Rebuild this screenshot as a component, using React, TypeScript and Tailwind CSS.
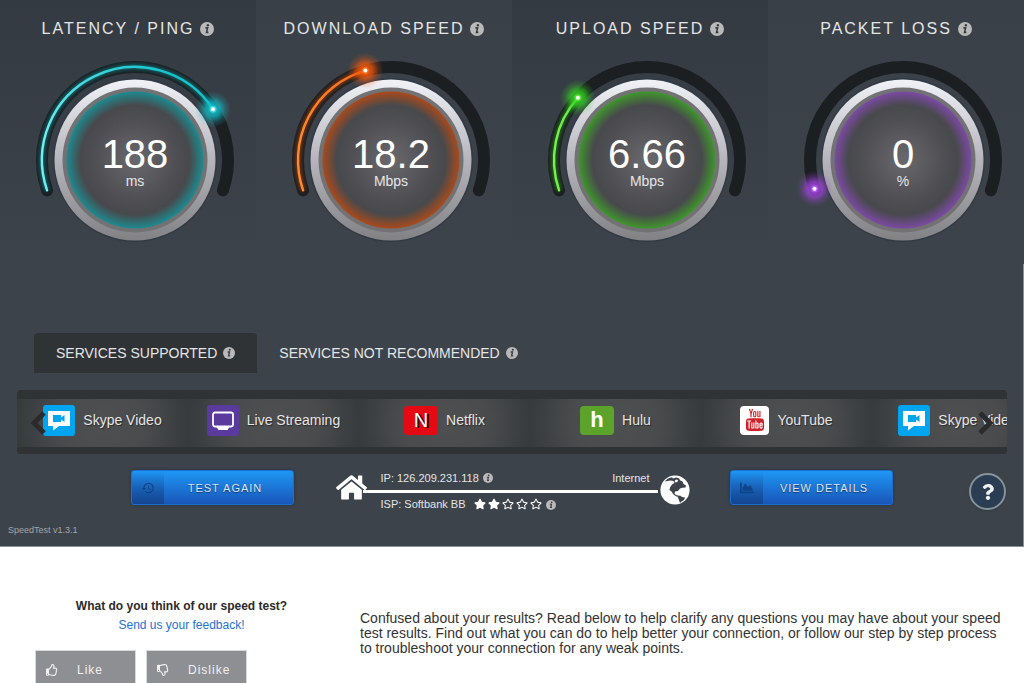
import type { ReactNode } from "react";
import { FaChartArea, FaHome, FaQuestion, FaRegStar, FaRegThumbsDown, FaRegThumbsUp, FaStar } from "react-icons/fa";
import { MdHistory } from "react-icons/md";
import { TfiYoutube } from "react-icons/tfi";

type GaugeData = {
  id: string;
  title: string;
  value: string;
  unit: string;
  // degrees travelled along the 216 degree track
  sweep: number;
  color: string;
  light: string;
  shade: string;
};

const gauges: GaugeData[] = [
  { id: "ping", title: "LATENCY / PING", value: "188", unit: "ms", sweep: 165, color: "#12c4cf", light: "#6ff0f0", shade: "#1d8a90" },
  { id: "down", title: "DOWNLOAD SPEED", value: "18.2", unit: "Mbps", sweep: 92, color: "#ff5a0a", light: "#ff8a2a", shade: "#a94a1c" },
  { id: "up", title: "UPLOAD SPEED", value: "6.66", unit: "Mbps", sweep: 60, color: "#35d822", light: "#74f24c", shade: "#3f962d" },
  { id: "loss", title: "PACKET LOSS", value: "0", unit: "%", sweep: 0, color: "#a545e6", light: "#c07af5", shade: "#7b4aa3" },
];

const CX = 120;
const CY = 112;
const R = 93;
const START = 162;

function point(deg: number) {
  const rad = (deg * Math.PI) / 180;
  return { x: CX + R * Math.cos(rad), y: CY + R * Math.sin(rad) };
}

function arc(from: number, to: number) {
  const a = point(from);
  const b = point(to);
  return `M${a.x} ${a.y}A${R} ${R} 0 ${to - from > 180 ? 1 : 0} 1 ${b.x} ${b.y}`;
}

export default function App() {
  return (
    <div className="min-h-screen bg-white font-['Liberation_Sans',Arial,sans-serif] text-[#e4e5e6]">
      <main className="border-r border-b border-[#8d9093] bg-[#3d434b]">
        <div className="-mr-px grid grid-cols-4">
          {gauges.map((g) => (
            <Gauge key={g.id} {...g} />
          ))}
        </div>
        <Tabs />
        <Carousel />
        <div className="mt-4 grid grid-cols-[1fr_auto_1fr] items-start">
          <span />
          <div className="flex items-start gap-10">
            <ActionButton icon={<MdHistory className="size-3.5" />}>TEST AGAIN</ActionButton>
            <Connection />
            <ActionButton icon={<FaChartArea className="size-3.5" />}>VIEW DETAILS</ActionButton>
          </div>
          <button
            type="button"
            aria-label="Help"
            className="mt-[3px] mr-[17px] flex size-[37px] items-center justify-center justify-self-end rounded-full border-2 border-[#84929a] bg-[#2b3d52] text-[#eef0f1] shadow"
          >
            <FaQuestion className="size-4" />
          </button>
        </div>
        <p className="px-2 pt-3.5 pb-2.5 text-[9px] leading-3 text-[#a3a6a9]">SpeedTest v1.3.1</p>
      </main>
      <Feedback />
    </div>
  );
}

function Gauge({ id, title, value, unit, sweep, color, light, shade }: GaugeData) {
  const dot = point(START + sweep);
  return (
    <section className="bg-linear-to-b from-[#394047] to-[#3d434b] pt-5 pb-4 odd:from-[#343a42] odd:to-[#3c434b]">
      <h2 className="flex h-[18px] items-center justify-center gap-1.5 text-base tracking-[2px]">
        {title}
        <InfoIcon className="size-3.5" />
      </h2>
      <div className="relative mt-2.5 pl-3.5">
        <svg viewBox="0 0 240 200" className="mx-auto block h-[200px] w-[240px] overflow-visible">
          <defs>
            <linearGradient id={`${id}-rim`} x1="0" y1="0" x2="0" y2="1">
              <stop offset="0" stopColor="#f1f1f8" />
              <stop offset="0.5" stopColor="#b5b5bb" />
              <stop offset="1" stopColor="#828286" />
            </linearGradient>
            <radialGradient id={`${id}-face`}>
              <stop offset="0" stopColor="#69686d" />
              <stop offset="0.6" stopColor="#4f4f53" />
              <stop offset="0.8" stopColor="#48494c" />
              <stop offset="1" stopColor={shade} />
            </radialGradient>
            <radialGradient id={`${id}-dot`}>
              <stop offset="0" stopColor={color} />
              <stop offset="0.4" stopColor={color} stopOpacity="0.7" />
              <stop offset="0.7" stopColor={color} stopOpacity="0.25" />
              <stop offset="1" stopColor={color} stopOpacity="0" />
            </radialGradient>
            <linearGradient id={`${id}-line`} gradientUnits="userSpaceOnUse" x1="30" y1="140" x2="160" y2="30">
              <stop offset="0.2" stopColor={light} />
              <stop offset="1" stopColor={color} />
            </linearGradient>
            <filter id={`${id}-blur`} x="-30%" y="-30%" width="160%" height="160%">
              <feGaussianBlur stdDeviation="2" />
            </filter>
          </defs>
          <path d={arc(START - 1, 379)} fill="none" stroke="#1c1f22" strokeWidth="12" strokeLinecap="round" />
          {sweep > 0 && (
            <>
              <path d={arc(START - 1, START + sweep)} fill="none" stroke={color} strokeOpacity="0.55" strokeWidth="4" filter={`url(#${id}-blur)`} />
              <path d={arc(START - 1, START + sweep)} fill="none" stroke={`url(#${id}-line)`} strokeWidth="2.4" strokeLinecap="round" />
            </>
          )}
          <circle cx={CX} cy={CY} r="82" fill="#323a45" />
          <circle cx={CX} cy={CY} r="80.5" fill={`url(#${id}-rim)`} />
          <circle cx={CX} cy={CY} r="72.5" fill="#727274" />
          <circle cx={CX} cy={CY} r="68.5" fill={`url(#${id}-face)`} />
          <circle cx={dot.x} cy={dot.y} r="18" fill={`url(#${id}-dot)`} />
          <circle cx={dot.x} cy={dot.y} r="3.5" fill={light} fillOpacity="0.5" />
          <circle cx={dot.x} cy={dot.y} r="2" fill="#ffffff" />
        </svg>
        <p className="absolute inset-x-0 top-[86px] pl-3.5 text-center text-white">
          <span className="block text-[40px] leading-10">{value}</span>
          <span className="block text-sm leading-[14px] text-[#e6e6e8]">{unit}</span>
        </p>
      </div>
    </section>
  );
}

function Tabs() {
  return (
    <div role="tablist" className="mt-[69px] ml-[34px] flex text-sm">
      <button type="button" role="tab" aria-selected="true" className="flex h-10 items-center gap-1.5 rounded-t bg-[#2f3336] px-[22px]">
        SERVICES SUPPORTED
        <InfoIcon className="size-3" />
      </button>
      <button type="button" role="tab" aria-selected="false" className="flex h-10 items-center gap-1.5 px-[22px]">
        SERVICES NOT RECOMMENDED
        <InfoIcon className="size-3" />
      </button>
    </div>
  );
}

function Carousel() {
  return (
    <div className="relative mt-[17px] mr-4 ml-[17px] overflow-hidden rounded bg-[#2f3336] pt-[9px] pb-[7px]">
      <ul className="flex text-sm text-shadow-[1px_1px_1px_#2a2a2a]">
        <Service name="Skype Video" icon={<SkypeIcon />} />
        <Service name="Live Streaming" icon={<TvIcon />} />
        <Service
          name="Netflix"
          icon={<span className="flex h-[29px] w-[34px] items-center justify-center rounded bg-[#e50914] text-xl text-white text-shadow-[2px_1px_0_#3a0508]">N</span>}
        />
        <Service
          name="Hulu"
          icon={<span className="flex h-[29px] w-[34px] items-center justify-center rounded bg-[#5ba32b] text-[22px] font-bold text-white text-shadow-none">h</span>}
        />
        <Service
          name="YouTube"
          icon={
            <span className="flex h-[29px] w-[29px] items-center justify-center rounded bg-white text-[#cd2129]">
              <TfiYoutube className="size-[22px]" />
            </span>
          }
        />
        <Service name="Skype Video" icon={<SkypeIcon />} />
      </ul>
      <button type="button" aria-label="Previous" className="absolute top-5 left-3 text-[#2b2b2b]">
        <Chevron className="h-[26px] w-[18px] rotate-180" />
      </button>
      <button type="button" aria-label="Next" className="absolute top-5 right-3 text-[#2b2b2b]">
        <Chevron className="h-[26px] w-[18px]" />
      </button>
    </div>
  );
}

function Service({ name, icon }: { name: string; icon: ReactNode }) {
  return (
    <li className="flex h-12 w-[171px] shrink-0 items-center justify-center gap-2 bg-[radial-gradient(circle_86px_at_center,#4e4f51_0%,#4a4b4d_50%,#373b3e_100%)] pb-1.5 whitespace-nowrap">
      {icon}
      {name}
    </li>
  );
}

function ActionButton({ icon, children }: { icon: ReactNode; children: ReactNode }) {
  return (
    <button
      type="button"
      className="flex h-[35px] w-[163px] items-stretch overflow-hidden rounded-[3px] border border-[#1c6fce] bg-linear-to-b from-[#1f97f5] to-[#1956b9] text-[11px] tracking-[1px] text-[#dfe3e8] shadow-[0_0_3px_#24303d]"
    >
      <span className="flex w-8 items-center justify-center bg-linear-to-b from-transparent to-[#123f80]/70 text-[#0f4488]">{icon}</span>
      <span className="flex flex-1 items-center justify-center pt-0.5 pr-1.5 text-shadow-[0_1px_1px_#123a70]">{children}</span>
    </button>
  );
}

function Connection() {
  return (
    <div className="flex w-[356px] items-center pt-0.5 text-[11px]">
      <FaHome className="-mt-2 ml-0.5 size-[31px] shrink-0 text-white" />
      <div className="flex-1">
        <div className="flex h-[18px] items-start justify-between pr-2 pl-3.5">
          <span className="flex items-center gap-1 leading-3">
            IP: 126.209.231.118
            <InfoIcon className="size-2.5" />
          </span>
          <span className="leading-3">Internet</span>
        </div>
        <div className="-ml-1 h-[3px] bg-white" />
        <div className="flex h-[17px] items-end pl-3.5 leading-3">
          ISP: Softbank BB
          <span className="mr-1 ml-2 flex gap-0.5 text-white">
            <FaStar className="size-3" />
            <FaStar className="size-3" />
            <FaRegStar className="size-3" />
            <FaRegStar className="size-3" />
            <FaRegStar className="size-3" />
          </span>
          <InfoIcon className="size-2.5" />
        </div>
      </div>
      <GlobeIcon />
    </div>
  );
}

function Feedback() {
  return (
    <footer className="grid grid-cols-[293px_1fr] gap-8 pt-[51px] pr-4 pl-[35px] text-[#333333]">
      <div>
        <div className="text-center text-xs">
          <p className="font-bold text-[#2b2b2b]">What do you think of our speed test?</p>
          <a href="#feedback" className="mt-[3px] inline-block text-[#2471d3]">
            Send us your feedback!
          </a>
        </div>
        <div className="mt-[17px] flex gap-2.5">
          <VoteButton icon={<FaRegThumbsUp className="size-3" />}>Like</VoteButton>
          <VoteButton icon={<FaRegThumbsDown className="size-3" />}>Dislike</VoteButton>
        </div>
      </div>
      <p className="pt-[13px] text-sm leading-[15px]">
        Confused about your results? Read below to help clarify any questions you may have about your speed test results. Find out what you can do to help better your
        connection, or follow our step by step process to troubleshoot your connection for any weak points.
      </p>
    </footer>
  );
}

function VoteButton({ icon, children }: { icon: ReactNode; children: ReactNode }) {
  return (
    <button type="button" className="flex h-10 w-[101px] items-center gap-[19px] border border-[#d9d9da] bg-[#8e8f93] pl-2.5 text-xs tracking-[1px] text-[#f0f0f0]">
      {icon}
      {children}
    </button>
  );
}

function InfoIcon({ className }: { className: string }) {
  return (
    <svg viewBox="0 0 14 14" className={`${className} shrink-0`} aria-hidden="true">
      <circle cx="7" cy="7" r="7" fill="#b9b9b9" />
      <circle cx="7.9" cy="3.3" r="1.2" fill="#3a3f45" />
      <path d="M5.4 5.9h2.2L6.5 10.4h1.9" fill="none" stroke="#3a3f45" strokeWidth="1.6" />
    </svg>
  );
}

function GlobeIcon() {
  return (
    <svg viewBox="0 0 30 30" className="-mt-0.5 ml-0.5 size-[30px] shrink-0" aria-hidden="true">
      <circle cx="15" cy="15" r="14.6" fill="#ffffff" />
      <path
        d="M4.500 6.500L8 3.500l4-1.300 1 1.300 3-1 3 .8 1 2 2.500 1.200 1 2.500 2.500 1.500-.5 2-3 .3-2.500.7-2 2.500-3 .5-.5 2 1.500 1.500 2.500.5 1 1.500-3-.5-3-2-2-3-2-1.500.5-2.500 2-3 2.500-1.500-1-2-3-.5z"
        fill="#3d434b"
      />
      <path d="M16 4.500l2 .5-.5 2-2 .5-1-1.500z" fill="#ffffff" />
      <path d="M17.500 21.500l2.500-1 2 1.500 3 .5-1 2.500-2.500 1.500-1.500 1.500-1-3z" fill="#3d434b" />
    </svg>
  );
}

function Chevron({ className }: { className: string }) {
  return (
    <svg viewBox="0 0 18 26" className={className} aria-hidden="true">
      <path d="M3 3l10 10L3 23" fill="none" stroke="currentColor" strokeWidth="5" />
    </svg>
  );
}

function SkypeIcon() {
  return (
    <svg viewBox="0 0 32 31" className="h-[31px] w-8" aria-hidden="true">
      <rect width="32" height="31" rx="3" fill="#00a5f0" />
      <path d="M5 6h22v15H16l-6 4.500v-4.500H5z" fill="#ffffff" />
      <path d="M10 10h8v2.500l3.500-2.500v7L18 14.500V17h-8z" fill="#00a5f0" />
    </svg>
  );
}

function TvIcon() {
  return (
    <svg viewBox="0 0 32 31" className="h-[31px] w-8" aria-hidden="true">
      <rect width="32" height="31" rx="3" fill="#5b3a9e" />
      <rect x="6" y="7.500" width="20" height="14" rx="2" fill="none" stroke="#ffffff" strokeWidth="1.800" />
      <path d="M9.500 22h13l-2 3h-9z" fill="#ffffff" />
    </svg>
  );
}
